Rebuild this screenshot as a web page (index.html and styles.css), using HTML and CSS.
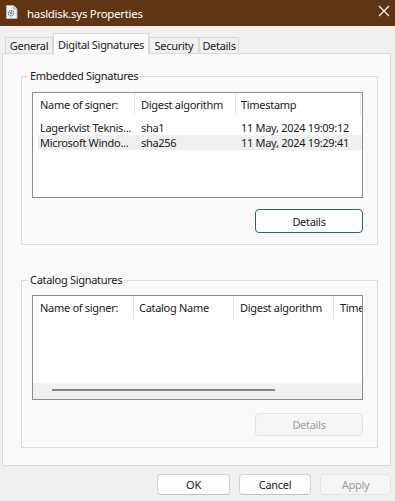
FILE: index.html
```html
<!DOCTYPE html>
<html>
<head>
<meta charset="utf-8">
<link rel="stylesheet" href="styles.css">
</head>
<body>
<div class="window">
  <div class="titlebar">
    <svg class="app-icon" viewBox="0 0 12 14" width="12" height="14">
      <path d="M0.5 0.5h7l3.5 3.5v9.5h-10.5z" fill="#f4f4f4" stroke="#b4b4b4"/>
      <path d="M7.5 0.5v3.5h3.5" fill="#dedede" stroke="#b4b4b4"/>
      <circle cx="5" cy="8.2" r="2.6" fill="none" stroke="#6f88a6" stroke-width="1.6" stroke-dasharray="1.3 0.7"/>
      <circle cx="5" cy="8.2" r="1.1" fill="#6f88a6"/>
    </svg>
    <span class="title">hasldisk.sys Properties</span>
    <svg class="close" viewBox="0 0 12 12" width="12" height="12">
      <path d="M1 1L11 11M11 1L1 11" stroke="#ffffff" stroke-width="1.1"/>
    </svg>
  </div>

  <div class="tabs">
    <div class="tab t-general">General</div>
    <div class="tab t-sig active">Digital Signatures</div>
    <div class="tab t-sec">Security</div>
    <div class="tab t-det">Details</div>
  </div>

  <div class="panel">
    <section class="group g1">
      <div class="group-title"><span>Embedded Signatures</span></div>
      <div class="group-body">
        <div class="listview lv1">
          <div class="lv-header">
            <div class="col a1">Name of signer:</div>
            <div class="col a2">Digest algorithm</div>
            <div class="col a3">Timestamp</div>
          </div>
          <div class="lv-body">
            <div class="row">
              <div class="cell r1">Lagerkvist Teknis...</div>
              <div class="cell r2">sha1</div>
              <div class="cell r3">11 May, 2024 19:09:12</div>
            </div>
            <div class="row selected">
              <div class="cell r1">Microsoft Windo...</div>
              <div class="cell r2">sha256</div>
              <div class="cell r3">11 May, 2024 19:29:41</div>
            </div>
          </div>
        </div>
        <div class="btn-row">
          <button class="btn details focused">Details</button>
        </div>
      </div>
    </section>

    <section class="group g2">
      <div class="group-title"><span>Catalog Signatures</span></div>
      <div class="group-body">
        <div class="listview lv2">
          <div class="lv-header">
            <div class="col b1">Name of signer:</div>
            <div class="col b2">Catalog Name</div>
            <div class="col b3">Digest algorithm</div>
            <div class="col b4">Timestamp</div>
          </div>
          <div class="lv-body"></div>
          <div class="hscroll"><div class="thumb"></div></div>
        </div>
        <div class="btn-row">
          <button class="btn details disabled">Details</button>
        </div>
      </div>
    </section>
  </div>

  <div class="footer">
    <button class="btn fbtn ok">OK</button>
    <button class="btn fbtn cancel">Cancel</button>
    <button class="btn fbtn apply disabled">Apply</button>
  </div>
</div>
</body>
</html>
```

FILE: styles.css
```css
* { box-sizing: border-box; }
html, body { margin: 0; padding: 0; }
body {
  width: 395px;
  height: 501px;
  overflow: hidden;
  background: #f0f0f0;
  font-family: "Noto Sans", "Open Sans", "Liberation Sans", sans-serif;
  font-size: 11px;
  letter-spacing: -0.3px;
  color: #1a1a1a;
}
.window {
  width: 395px;
  height: 501px;
  display: flex;
  flex-direction: column;
}

/* title bar */
.titlebar {
  height: 26px;
  flex: none;
  background: #5f3516;
  display: flex;
  align-items: center;
  padding-left: 6px;
  color: #ffffff;
}
.app-icon { flex: none; width: 12px; height: 14px; margin-top: -3px; }
.title { margin-left: 9px; font-size: 11.5px; letter-spacing: -0.3px; }
.close { margin-left: auto; margin-right: 5px; width: 12px; height: 12px; margin-top: -4px; }

/* tabs */
.tabs {
  height: 27px;
  flex: none;
  display: flex;
  align-items: flex-end;
  padding-left: 5px;
  position: relative;
  z-index: 1;
}
.tab {
  height: 16px;
  border: 1px solid #d9d9d9;
  border-bottom: none;
  display: flex;
  align-items: center;
  justify-content: center;
  background: #f0f0f0;
  white-space: nowrap;
}
.t-general { width: 48px; }
.t-sig { width: 96px; }
.t-sec { width: 50px; }
.t-det { width: 40px; }
.tab.active {
  height: 21px;
  margin-bottom: -1px;
  background: #fafafa;
}

/* panel */
.panel {
  flex: none;
  margin-left: 2px;
  width: 389px;
  height: 413px;
  border: 1px solid #d9d9d9;
  background: #f9f9f9;
  padding: 15px 12px 0 18px;
}

/* group box */
.group-title {
  display: flex;
  height: 14px;
  line-height: 14px;
  white-space: nowrap;
}
.group-title::before {
  content: "";
  width: 6px;
  margin-top: 7px;
  border-top: 1px solid #dcdcdc;
  border-left: 1px solid #dcdcdc;
}
.group-title::after {
  content: "";
  flex: 1;
  margin-top: 7px;
  border-top: 1px solid #dcdcdc;
  border-right: 1px solid #dcdcdc;
}
.group-title span { padding: 0 2px; }
.group-body {
  border: 1px solid #dcdcdc;
  border-top: none;
  padding: 9px 14px 11px 10px;
}
.g2 { margin-top: 28px; }
.g2 .group-body { padding-top: 8px; }

/* list view */
.listview {
  background: #ffffff;
  border: 1px solid #8c8c8c;
  overflow: hidden;
  display: flex;
  flex-direction: column;
}
.lv1 { height: 106px; }
.lv2 { height: 105px; }
.lv-header {
  flex: none;
  height: 23px;
  display: flex;
  white-space: nowrap;
}
.col {
  flex: none;
  height: 23px;
  line-height: 24px;
  border-right: 1px solid #e5e5e5;
}
.a1 { width: 102px; padding-left: 7px; }
.a2 { width: 101px; padding-left: 6px; }
.a3 { width: 125px; padding-left: 5px; }
.b1 { width: 101px; padding-left: 7px; }
.b2 { width: 100px; padding-left: 5px; }
.b3 { width: 100px; padding-left: 6px; }
.b4 { width: 100px; padding-left: 6px; }

.lv-body { flex: 1; padding-top: 4px; }
.row {
  display: flex;
  height: 15px;
  line-height: 15px;
  margin-left: 5px;
  white-space: nowrap;
}
.row.selected { background: #efefef; }
.cell { flex: none; overflow: hidden; }
.r1 { width: 97px; padding-left: 2px; }
.r2 { width: 101px; padding-left: 6px; }
.r3 { width: 124px; padding-left: 5px; }

.hscroll {
  flex: none;
  height: 16px;
  background: #f0f0f0;
  padding-top: 6px;
}
.thumb {
  margin-left: 19px;
  width: 223px;
  height: 2px;
  background: #868686;
}

/* buttons */
.btn-row {
  display: flex;
  justify-content: flex-end;
}
.g1 .btn-row { margin-top: 11px; }
.g2 .btn-row { margin-top: 13px; }
.btn {
  font-family: inherit;
  font-size: 11px;
  letter-spacing: -0.3px;
  color: #1a1a1a;
  background: #fdfdfd;
  border: 1px solid #d3d3d3;
  border-bottom-color: #c2c2c2;
  border-radius: 4px;
  padding: 0;
  margin: 0;
}
.details { width: 108px; height: 24px; }
.g2 .details { height: 23px; }
.btn.focused { border: 1px solid #2f5f80; }
.btn.disabled {
  background: #f5f5f5;
  border-color: #e3e3e3;
  color: #a0a0a0;
}

.footer {
  flex: none;
  display: flex;
  justify-content: flex-end;
  gap: 9px;
  padding: 8px 4px 0 0;
}
.fbtn { height: 21px; }
.ok { width: 73px; }
.cancel { width: 72px; }
.apply { width: 71px; }
```
